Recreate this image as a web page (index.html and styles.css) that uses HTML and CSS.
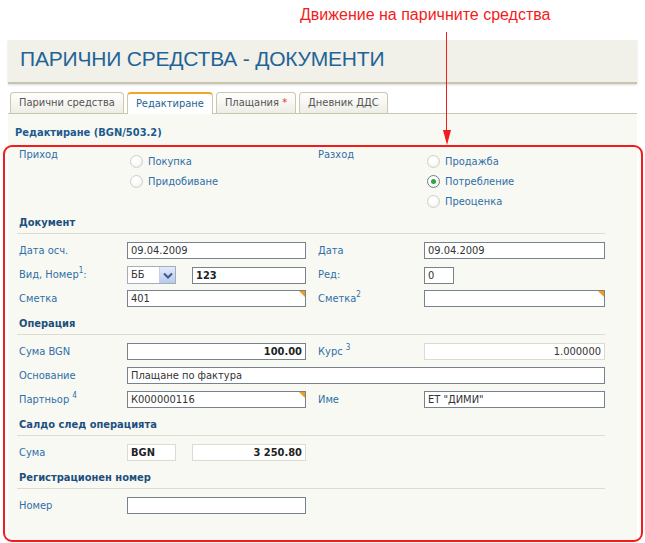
FILE: index.html
```html
<!DOCTYPE html>
<html lang="bg">
<head>
<meta charset="utf-8">
<title>Парични средства - документи</title>
<link rel="stylesheet" href="styles.css">
</head>
<body>
<div class="screen">
  <div class="note">Движение на паричните средства</div>
  <div class="page">
    <div class="header"><h1>ПАРИЧНИ СРЕДСТВА - ДОКУМЕНТИ</h1></div>
    <div class="tabs">
      <div class="tab">Парични средства</div>
      <div class="tab active">Редактиране</div>
      <div class="tab">Плащания <span class="star">*</span></div>
      <div class="tab">Дневник ДДС</div>
    </div>
    <div class="content">
      <div class="subtitle">Редактиране (BGN/503.2)</div>
      <div class="form">
        <div class="types">
          <div class="lbl">Приход</div>
          <div class="radios">
            <div class="radio"><span class="dot"></span>Покупка</div>
            <div class="radio"><span class="dot"></span>Придобиване</div>
          </div>
          <div></div>
          <div class="lbl">Разход</div>
          <div class="radios">
            <div class="radio"><span class="dot"></span>Продажба</div>
            <div class="radio"><span class="dot on"></span>Потребление</div>
            <div class="radio"><span class="dot"></span>Преоценка</div>
          </div>
        </div>

        <div class="sec first">Документ</div>
        <div class="row">
          <div class="lbl">Дата осч.</div>
          <div class="inp">09.04.2009</div>
          <div></div>
          <div class="lbl">Дата</div>
          <div class="inp">09.04.2009</div>
        </div>
        <div class="row">
          <div class="lbl">Вид, Номер<sup>1</sup>:</div>
          <div class="pair">
            <div class="sel"><span class="sel-text">ББ</span><span class="btn"><svg width="10" height="7" viewBox="0 0 10 7"><path d="M1 1.5 L5 5.5 L9 1.5" fill="none" stroke="#3f5a86" stroke-width="2"/></svg></span></div>
            <div class="inp bold">123</div>
          </div>
          <div></div>
          <div class="lbl">Ред:</div>
          <div class="inp short">0</div>
        </div>
        <div class="row">
          <div class="lbl">Сметка</div>
          <div class="inp tri">401</div>
          <div></div>
          <div class="lbl">Сметка<sup>2</sup></div>
          <div class="inp tri"></div>
        </div>

        <div class="sec">Операция</div>
        <div class="row">
          <div class="lbl">Сума BGN</div>
          <div class="inp num">100.00</div>
          <div></div>
          <div class="lbl">Курс <sup>3</sup></div>
          <div class="inp dis right">1.000000</div>
        </div>
        <div class="row">
          <div class="lbl">Основание</div>
          <div class="inp wide">Плащане по фактура</div>
        </div>
        <div class="row">
          <div class="lbl">Партньор <sup>4</sup></div>
          <div class="inp tri">К000000116</div>
          <div></div>
          <div class="lbl">Име</div>
          <div class="inp">ЕТ "ДИМИ"</div>
        </div>

        <div class="sec">Салдо след операцията</div>
        <div class="row">
          <div class="lbl">Сума</div>
          <div class="pair">
            <div class="inp dis bold cur">BGN</div>
            <div class="inp dis num">3 250.80</div>
          </div>
        </div>

        <div class="sec">Регистрационен номер</div>
        <div class="row">
          <div class="lbl">Номер</div>
          <div class="inp"></div>
        </div>
      </div>
    </div>
  </div>

  <div class="frame"></div>
  <div class="arrow-line"></div>
  <svg class="arrow-head" width="10" height="15" viewBox="0 0 10 15"><polygon points="1,0 9,0 5,15" fill="#f21c1c"/></svg>
</div>
</body>
</html>
```

FILE: styles.css
```css
* { box-sizing: border-box; margin: 0; padding: 0; }

body {
  background: #fff;
  font-family: "DejaVu Sans Condensed", "DejaVu Sans", sans-serif;
  font-stretch: semi-condensed;
  font-size: 11px;
  color: #2e6fa7;
}

.screen {
  position: relative;
  width: 645px;
  height: 543px;
  overflow: hidden;
}

.note {
  height: 40px;
  padding: 5px 0 0 300px;
  font-family: "Liberation Sans", Arial, sans-serif;
  font-stretch: normal;
  font-size: 16px;
  line-height: 20px;
  color: #f21c1c;
}

.page {
  margin-left: 8px;
  width: 629px;
}

.header {
  height: 44px;
  background: #f1f0e9;
  border-bottom: 2px solid #c9c4ad;
  box-shadow: 0 1px 2px rgba(0, 0, 0, 0.15);
  padding: 6px 0 0 12px;
}

h1 {
  font-family: "Liberation Sans", Arial, sans-serif;
  font-stretch: normal;
  font-weight: normal;
  font-size: 21px;
  letter-spacing: -0.2px;
  line-height: 26px;
  color: #1f6496;
}

.tabs {
  height: 30px;
  display: flex;
  align-items: flex-end;
  gap: 3px;
  padding: 0 0 0 2px;
  border-bottom: 1px solid #cbc6af;
}

.tab {
  height: 21px;
  padding: 0 8px;
  line-height: 19px;
  border: 1px solid #cdc7ad;
  border-bottom: 0;
  border-radius: 4px 4px 0 0;
  background: linear-gradient(#ffffff, #eeede5);
  color: #555;
}

.tab.active {
  height: 22px;
  margin-bottom: -1px;
  background: #fff;
  border-top: 2px solid #f2a629;
  color: #1f6496;
}

.star { color: #e8321e; }

.content {
  background: #f9f9f4;
  padding: 12px 0 27px 0;
}

.subtitle {
  padding-left: 7px;
  line-height: 14px;
  font-weight: bold;
  color: #1d5a8e;
}

.form {
  margin-left: 9px;
  width: 588px;
}

.types,
.row {
  display: grid;
  grid-template-columns: 110px 179px 10px 108px 181px;
}

.types {
  margin-top: 8px;
  align-items: start;
}

.lbl {
  padding-left: 2px;
  line-height: 14px;
  white-space: nowrap;
}

.radios {
  margin-top: 3px;
}

.radio {
  height: 20px;
  display: flex;
  align-items: center;
  gap: 5px;
  padding-left: 3px;
}

.dot {
  width: 13px;
  height: 13px;
  border-radius: 50%;
  border: 1px solid #cfcfcb;
  background: radial-gradient(circle at 40% 35%, #ffffff 30%, #e9e9e4 100%);
  display: flex;
  align-items: center;
  justify-content: center;
}

.dot.on {
  border-color: #6f7e8e;
}

.dot.on::after {
  content: "";
  width: 5px;
  height: 5px;
  border-radius: 50%;
  background: #33a33a;
}

.sec {
  margin-top: 10px;
  margin-bottom: 8px;
  padding: 0 0 3px 2px;
  line-height: 14px;
  border-bottom: 1px solid #dedcd0;
  font-weight: bold;
  color: #1d4f7e;
}

.sec.first { margin-top: 5px; }

.row {
  height: 17px;
  align-items: center;
  margin-bottom: 7px;
}

.inp {
  position: relative;
  height: 17px;
  border: 1px solid #76838f;
  background: #fff;
  padding: 0 3px;
  line-height: 15px;
  color: #333;
  white-space: nowrap;
  overflow: hidden;
}

.inp.bold { font-weight: bold; color: #222; }
.inp.num { text-align: right; font-weight: bold; color: #222; }
.inp.right { text-align: right; }
.inp.dis { border-color: #dcdbd3; }
.inp.short { width: 30px; }
.inp.wide { grid-column: 2 / 6; }

.inp.tri::after {
  content: "";
  position: absolute;
  top: 0;
  right: 0;
  border-style: solid;
  border-width: 0 6px 6px 0;
  border-color: transparent #f39a1e transparent transparent;
}

.pair {
  display: flex;
  gap: 16px;
  align-items: center;
}

.pair .inp { flex: 1; }
.pair .inp.cur { flex: 0 0 49px; }

.sel {
  flex: 0 0 49px;
  height: 18px;
  display: flex;
  border: 1px solid #a3aebb;
  background: #fff;
  color: #333;
}

.sel-text {
  flex: 1;
  padding-left: 3px;
  line-height: 16px;
}

.btn {
  width: 16px;
  display: flex;
  align-items: center;
  justify-content: center;
  background: linear-gradient(#e3eafb, #b7caee);
  border-left: 1px solid #c3d0ea;
}

sup {
  font-size: 8px;
  line-height: 0;
  vertical-align: 5px;
}

.frame {
  position: absolute;
  left: 3px;
  top: 145px;
  width: 640px;
  height: 397px;
  border: 2px solid #f21c1c;
  border-radius: 9px;
  pointer-events: none;
}

.arrow-line {
  position: absolute;
  left: 446px;
  top: 32px;
  width: 1px;
  height: 102px;
  background: #f21c1c;
}

.arrow-head {
  position: absolute;
  left: 442px;
  top: 130px;
}
```
